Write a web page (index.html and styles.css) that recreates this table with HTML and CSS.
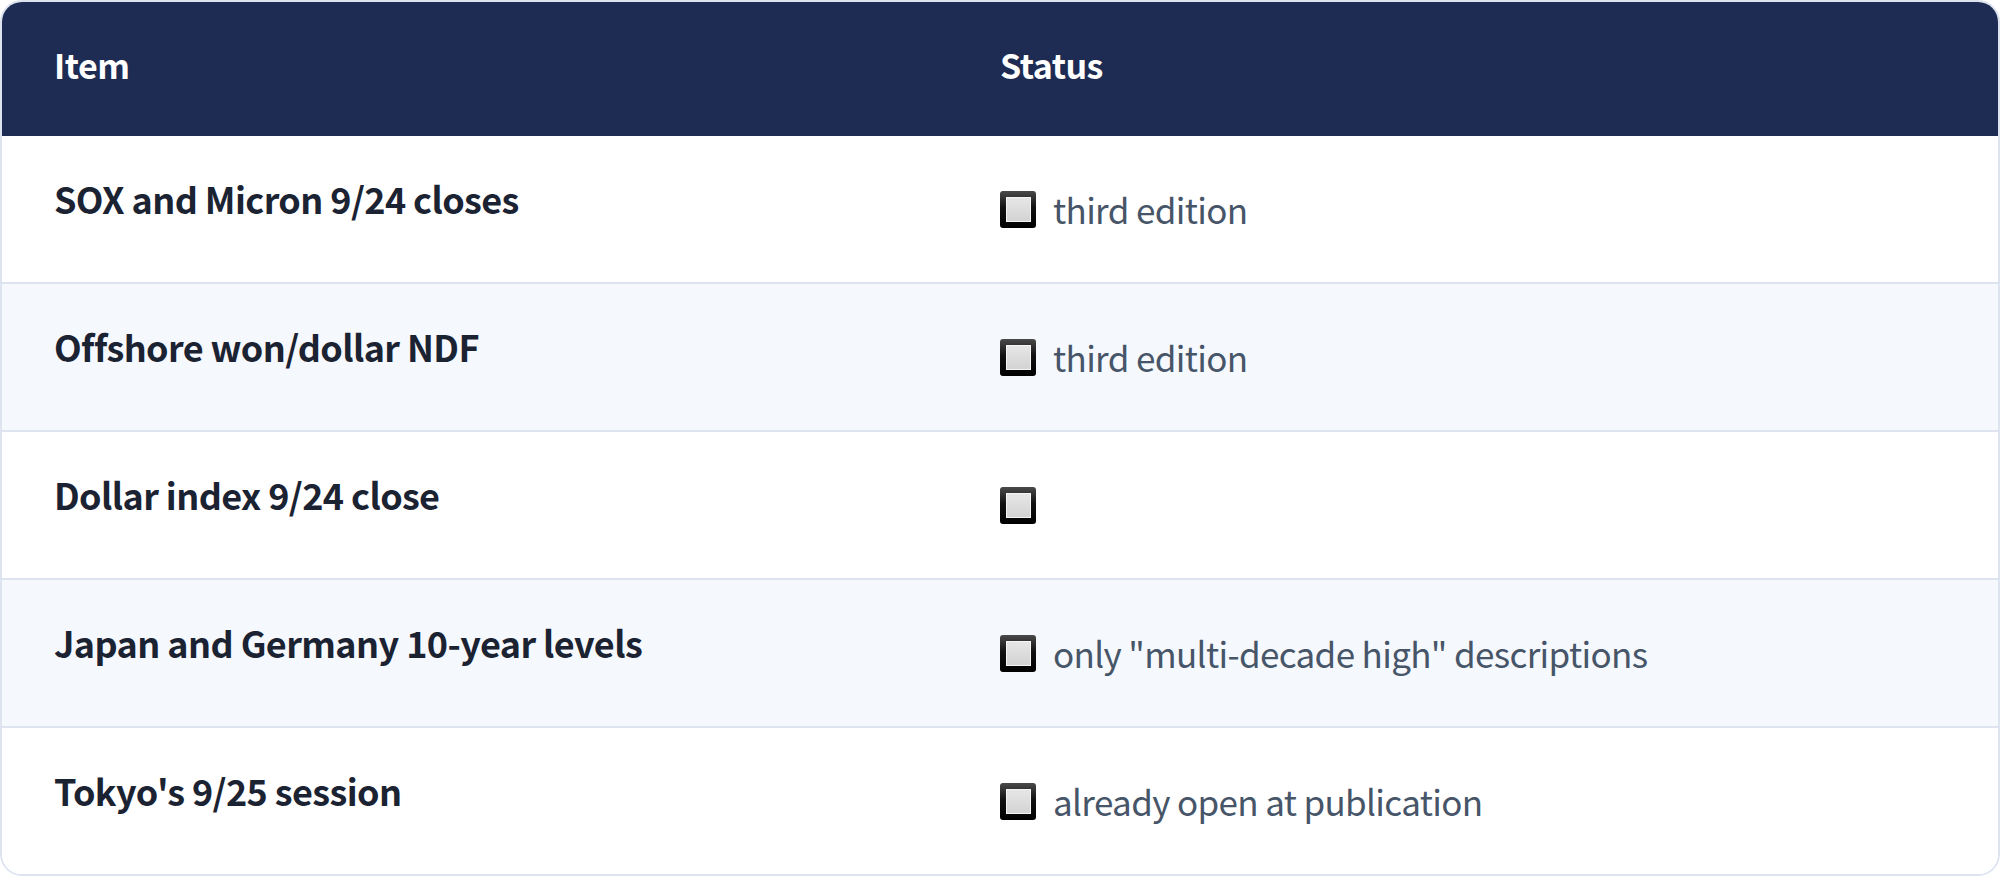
FILE: index.html
```html
<!DOCTYPE html>
<html lang="en">
<head>
<meta charset="utf-8">
<title>Status table</title>
<link rel="stylesheet" href="styles.css">
</head>
<body>
<div class="table">
  <div class="row head">
    <div class="cell">Item</div>
    <div class="cell">Status</div>
  </div>
  <div class="row">
    <div class="cell item">SOX and Micron 9/24 closes</div>
    <div class="cell status"><span class="box"></span><span class="note">third edition</span></div>
  </div>
  <div class="row alt">
    <div class="cell item">Offshore won/dollar NDF</div>
    <div class="cell status"><span class="box"></span><span class="note">third edition</span></div>
  </div>
  <div class="row">
    <div class="cell item">Dollar index 9/24 close</div>
    <div class="cell status"><span class="box"></span></div>
  </div>
  <div class="row alt">
    <div class="cell item">Japan and Germany 10-year levels</div>
    <div class="cell status"><span class="box"></span><span class="note">only "multi-decade high" descriptions</span></div>
  </div>
  <div class="row last">
    <div class="cell item">Tokyo's 9/25 session</div>
    <div class="cell status"><span class="box"></span><span class="note">already open at publication</span></div>
  </div>
</div>
</body>
</html>
```
FILE: styles.css
```css
html, body {
  margin: 0;
  padding: 0;
  background: #ffffff;
}

body {
  font-family: "Noto Sans CJK KR", "Noto Sans", sans-serif;
  font-size: 36px;
  line-height: 1.2;
}

.table {
  width: 2000px;
  box-sizing: border-box;
  border: 2px solid #dde4f0;
  border-radius: 22px;
  overflow: hidden;
}

.row {
  display: grid;
  grid-template-columns: 946px 1fr;
  height: 146px;
  border-bottom: 2px solid #dde4f0;
  background: #ffffff;
}

.row.alt {
  background: #f5f8fc;
}

.row.last {
  border-bottom: none;
}

.cell {
  padding: 41px 52px 0;
}

.row.head {
  height: 134px;
  border-bottom: none;
  background: #1e2c53;
  color: #ffffff;
  font-weight: 700;
  font-size: 34px;
  letter-spacing: -0.5px;
}

.row.head .cell {
  padding-top: 43px;
}

.item {
  font-weight: 700;
  color: #1b2333;
  letter-spacing: -0.6px;
}

.status {
  padding-top: 0;
  display: flex;
  align-items: center;
  gap: 17px;
  color: #475569;
  font-size: 35px;
  letter-spacing: -0.65px;
}

.box {
  position: relative;
  flex: none;
  width: 36px;
  height: 37px;
  border-radius: 3px;
  background: linear-gradient(#4a4a4a, #111111 45%, #000000);
}

.box::after {
  content: "";
  position: absolute;
  left: 6px;
  top: 6px;
  width: 23px;
  height: 23px;
  border: 1px solid #f4f4f4;
  background: linear-gradient(#e6e6e6, #d3d3d3);
}
```
